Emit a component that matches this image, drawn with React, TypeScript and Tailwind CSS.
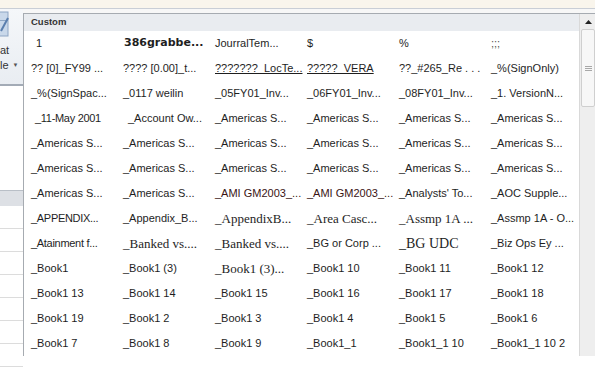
import React from 'react';

type Cell = [string, string?];

const sans = "font-['Liberation_Sans',Arial,sans-serif]";
const serif = "font-['Liberation_Serif','Times_New_Roman',serif] text-[13px]";
const link = 'text-[10px] text-[#1a1aff] underline';

const rows: Cell[][] = [
  [
    ['1', 'pl-[9px]'],
    ['386grabbe...', "font-['DejaVu_Sans',sans-serif] font-bold text-[10px] pl-[5px]"],
    ['JourralTem...'],
    ['$'],
    ['%'],
    [';;;', 'text-[8px] text-[#555]'],
  ],
  [
    ['?? [0]_FY99 ...'],
    ['???? [0.00]_t...', 'pl-0'],
    ['???????_LocTe...', link],
    ['?????_VERA', link],
    ['??_#265_Re . . .'],
    ['_%(SignOnly)', 'text-[#1b1b4a]'],
  ],
  [
    ['_%(SignSpac...'],
    ['_0117 weilin', 'pl-0'],
    ['_05FY01_Inv...'],
    ['_06FY01_Inv...'],
    ['_08FY01_Inv...'],
    ['_1. VersionN...'],
  ],
  [
    ['_11-May 2001', 'pl-[8px] tracking-[-0.3px]'],
    ['_Account Ow...', 'pl-[9px]'],
    ['_Americas S...'],
    ['_Americas S...'],
    ['_Americas S...'],
    ['_Americas S...'],
  ],
  Array(6).fill(['_Americas S...']),
  Array(6).fill(['_Americas S...']),
  [
    ['_Americas S...'],
    ['_Americas S...'],
    ['_AMI GM2003_...', 'text-[8px] text-[#3a1414]'],
    ['_AMI GM2003_...', 'text-[8px] text-[#3a1414]'],
    ['_Analysts\' To...'],
    ['_AOC Supple...'],
  ],
  [
    ['_APPENDIX...', 'tracking-[-0.3px]'],
    ['_Appendix_B...'],
    ['_AppendixB...', serif],
    ['_Area Casc...', serif],
    ['_Assmp 1A ...', serif],
    ['_Assmp 1A - O...', 'text-[10px]'],
  ],
  [
    ['_Atainment f...', 'tracking-[-0.3px]'],
    ['_Banked vs....', serif],
    ['_Banked vs....', serif],
    ['_BG or Corp ...', 'text-[10.5px]'],
    ['_BG UDC', "font-['Liberation_Serif',serif] text-[14px]"],
    ['_Biz Ops Ey ...', 'text-[10px]'],
  ],
  [
    ['_Book1'],
    ['_Book1 (3)', 'text-[10.5px]'],
    ['_Book1 (3)...', serif],
    ['_Book1 10'],
    ['_Book1 11'],
    ['_Book1 12'],
  ],
  [['_Book1 13'], ['_Book1 14'], ['_Book1 15'], ['_Book1 16'], ['_Book1 17'], ['_Book1 18']],
  [['_Book1 19'], ['_Book1 2'], ['_Book1 3'], ['_Book1 4'], ['_Book1 5'], ['_Book1 6']],
  [['_Book1 7'], ['_Book1 8'], ['_Book1 9'], ['_Book1_1'], ['_Book1_1 10'], ['_Book1_1 10 2']],
];

export default function App() {
  return (
    <div className={`w-[595px] h-[367px] overflow-hidden bg-white flex flex-col ${sans}`}>
      {/* ribbon strip */}
      <div className="h-[8px] bg-[#f9f5ec] shrink-0" />
      <div className="h-px bg-[#c9ced6] shrink-0" />

      <div className="flex flex-1 min-h-0">
        {/* left: ribbon edge + sheet behind the gallery */}
        <div className="w-[23px] shrink-0 flex flex-col">
          <div className="h-[77px] bg-gradient-to-b from-[#f5f7fa] to-[#e9edf2] flex flex-col">
            <svg width="23" height="27" viewBox="0 0 23 27" className="mt-[2px]">
              <rect x="-4" y="1" width="12" height="24" fill="#c9d8ea" stroke="#8ea6c4" />
              <rect x="-4" y="9" width="12" height="1" fill="#8ea6c4" />
              <path d="M1 20 L8 7" stroke="#5b7fae" strokeWidth="2" />
            </svg>
            <div className="text-[11px] leading-[13px] text-[#333] mt-[6px]">at</div>
            <div className="flex items-center text-[11px] leading-[13px] text-[#333] mt-[2px]">
              <span>le</span>
              <span className="ml-[4px] text-[6px] text-[#555]">▼</span>
            </div>
          </div>
          <div className="h-[2px] bg-[#a3abb6]" />
          <div className="h-[107px] bg-white" />
          <div className="h-[16px] bg-[#dde0e5] border-t border-[#b9bfc7]" />
          {Array.from({ length: 7 }).map((_, i) => (
            <div key={i} className="h-[23px] shrink-0 border-b border-[#dcdcdc]" />
          ))}
        </div>

        {/* gallery */}
        <div className="flex-1 flex flex-col bg-[#f7f7f7]">
          <div className="h-[4px] shrink-0" />
          <div className="h-[343px] flex border-l border-t border-[#a6abb1] bg-white">
            <div className="flex-1 flex flex-col min-w-0">
              <div className="h-[17px] bg-[#e9ecf0] flex items-center pl-[7px] text-[9.5px] font-bold text-[#333]">
                Custom
              </div>
              <div className="grid grid-cols-[repeat(6,92px)] auto-rows-[25px] pl-[3px]">
                {rows.map((row, r) =>
                  row.map(([text, cls], c) => (
                    <div
                      key={`${r}-${c}`}
                      className={`flex items-center pl-[4px] whitespace-nowrap overflow-hidden text-[11px] text-[#1e1e1e] ${cls ?? ''}`}
                    >
                      {text}
                    </div>
                  ))
                )}
              </div>
            </div>

            {/* scrollbar */}
            <div className="w-[17px] shrink-0 bg-[#eeeeee] border-l border-[#d9d9d9] flex flex-col">
              <div className="h-[15px] flex items-center justify-center">
                <svg width="7" height="4" viewBox="0 0 7 4">
                  <path d="M0 4 L3.5 0 L7 4 Z" fill="#222" />
                </svg>
              </div>
              <div className="h-[78px] mx-px bg-[#f7f7f7] border border-[#cfcfcf] rounded-[2px] flex flex-col items-center justify-center gap-px">
                <div className="w-[7px] h-px bg-[#a8a8a8]" />
                <div className="w-[7px] h-px bg-[#a8a8a8]" />
                <div className="w-[7px] h-px bg-[#a8a8a8]" />
              </div>
            </div>
          </div>
          <div className="flex-1 bg-white" />
        </div>
      </div>
    </div>
  );
}
